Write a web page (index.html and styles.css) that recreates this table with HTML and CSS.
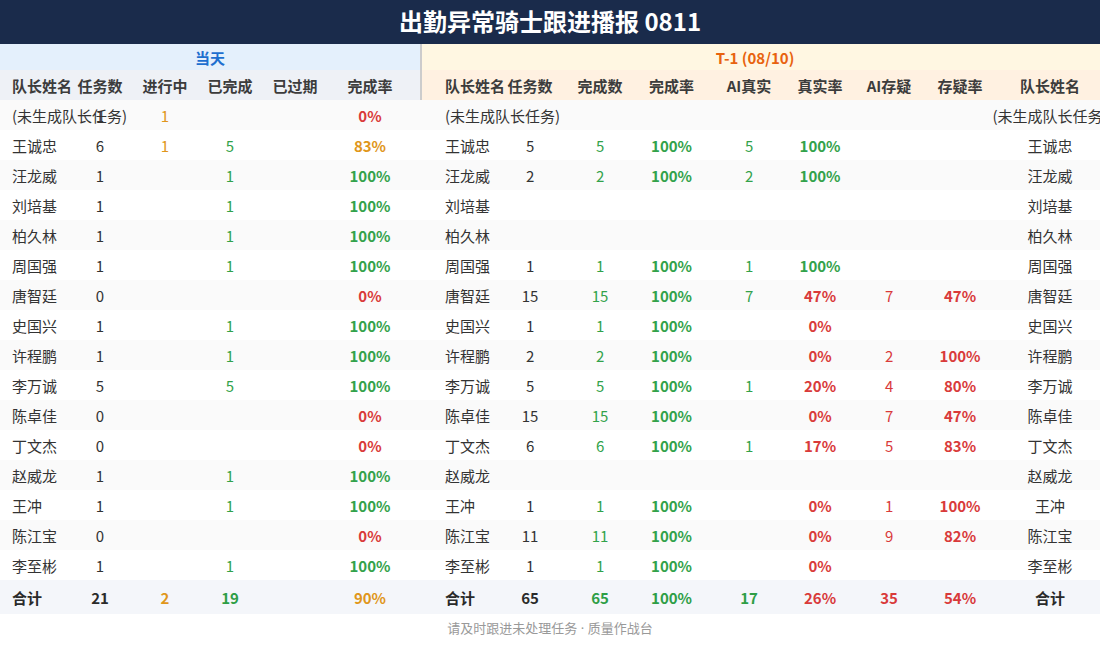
FILE: index.html
```html
<!DOCTYPE html>
<html lang="zh-CN">
<head>
<meta charset="utf-8">
<title>出勤异常骑士跟进播报 0811</title>
<link rel="stylesheet" href="styles.css">
</head>
<body>
<div class="page">
  <header class="title">出勤异常骑士跟进播报 0811</header>
  <div class="wrap">
    <table class="board">
      <colgroup>
        <col class="w68"><col class="w64"><col class="w66"><col class="w64"><col class="w66"><col class="w84"><col class="w8">
        <col class="w2">
        <col class="w73"><col class="w70"><col class="w70"><col class="w73"><col class="w82"><col class="w60"><col class="w78"><col class="w64"><col class="w116">
      </colgroup>
      <thead>
        <tr class="grp">
          <th colspan="7" class="grp-today">当天</th>
          <th class="sep"></th>
          <th colspan="9" class="grp-t1">T-1 (08/10)</th>
        </tr>
        <tr class="hdr">
          <th class="nm l">队长姓名</th><th class="l">任务数</th><th class="l">进行中</th><th class="l">已完成</th><th class="l">已过期</th><th class="l">完成率</th><th class="l"></th>
          <th class="sep"></th>
          <th class="nm2 r1">队长姓名</th><th class="r1">任务数</th><th class="r1">完成数</th><th class="r1">完成率</th><th class="r1">AI真实</th><th class="r1">真实率</th><th class="r1">AI存疑</th><th class="r1">存疑率</th><th class="r1">队长姓名</th>
        </tr>
      </thead>
      <tbody>
        <tr><td class="nm">(未生成队长任务)</td><td>1</td><td class="o">1</td><td></td><td></td><td class="rt r">0%</td><td></td><td class="sep"></td><td class="nm2">(未生成队长任务)</td><td></td><td></td><td></td><td></td><td></td><td></td><td></td><td>(未生成队长任务)</td></tr>
        <tr><td class="nm">王诚忠</td><td>6</td><td class="o">1</td><td class="g">5</td><td></td><td class="rt o">83%</td><td></td><td class="sep"></td><td class="nm2">王诚忠</td><td>5</td><td class="g">5</td><td class="rt g">100%</td><td class="g">5</td><td class="rt g">100%</td><td></td><td></td><td>王诚忠</td></tr>
        <tr><td class="nm">汪龙威</td><td>1</td><td></td><td class="g">1</td><td></td><td class="rt g">100%</td><td></td><td class="sep"></td><td class="nm2">汪龙威</td><td>2</td><td class="g">2</td><td class="rt g">100%</td><td class="g">2</td><td class="rt g">100%</td><td></td><td></td><td>汪龙威</td></tr>
        <tr><td class="nm">刘培基</td><td>1</td><td></td><td class="g">1</td><td></td><td class="rt g">100%</td><td></td><td class="sep"></td><td class="nm2">刘培基</td><td></td><td></td><td></td><td></td><td></td><td></td><td></td><td>刘培基</td></tr>
        <tr><td class="nm">柏久林</td><td>1</td><td></td><td class="g">1</td><td></td><td class="rt g">100%</td><td></td><td class="sep"></td><td class="nm2">柏久林</td><td></td><td></td><td></td><td></td><td></td><td></td><td></td><td>柏久林</td></tr>
        <tr><td class="nm">周国强</td><td>1</td><td></td><td class="g">1</td><td></td><td class="rt g">100%</td><td></td><td class="sep"></td><td class="nm2">周国强</td><td>1</td><td class="g">1</td><td class="rt g">100%</td><td class="g">1</td><td class="rt g">100%</td><td></td><td></td><td>周国强</td></tr>
        <tr><td class="nm">唐智廷</td><td>0</td><td></td><td></td><td></td><td class="rt r">0%</td><td></td><td class="sep"></td><td class="nm2">唐智廷</td><td>15</td><td class="g">15</td><td class="rt g">100%</td><td class="g">7</td><td class="rt r">47%</td><td class="r">7</td><td class="rt r">47%</td><td>唐智廷</td></tr>
        <tr><td class="nm">史国兴</td><td>1</td><td></td><td class="g">1</td><td></td><td class="rt g">100%</td><td></td><td class="sep"></td><td class="nm2">史国兴</td><td>1</td><td class="g">1</td><td class="rt g">100%</td><td></td><td class="rt r">0%</td><td></td><td></td><td>史国兴</td></tr>
        <tr><td class="nm">许程鹏</td><td>1</td><td></td><td class="g">1</td><td></td><td class="rt g">100%</td><td></td><td class="sep"></td><td class="nm2">许程鹏</td><td>2</td><td class="g">2</td><td class="rt g">100%</td><td></td><td class="rt r">0%</td><td class="r">2</td><td class="rt r">100%</td><td>许程鹏</td></tr>
        <tr><td class="nm">李万诚</td><td>5</td><td></td><td class="g">5</td><td></td><td class="rt g">100%</td><td></td><td class="sep"></td><td class="nm2">李万诚</td><td>5</td><td class="g">5</td><td class="rt g">100%</td><td class="g">1</td><td class="rt r">20%</td><td class="r">4</td><td class="rt r">80%</td><td>李万诚</td></tr>
        <tr><td class="nm">陈卓佳</td><td>0</td><td></td><td></td><td></td><td class="rt r">0%</td><td></td><td class="sep"></td><td class="nm2">陈卓佳</td><td>15</td><td class="g">15</td><td class="rt g">100%</td><td></td><td class="rt r">0%</td><td class="r">7</td><td class="rt r">47%</td><td>陈卓佳</td></tr>
        <tr><td class="nm">丁文杰</td><td>0</td><td></td><td></td><td></td><td class="rt r">0%</td><td></td><td class="sep"></td><td class="nm2">丁文杰</td><td>6</td><td class="g">6</td><td class="rt g">100%</td><td class="g">1</td><td class="rt r">17%</td><td class="r">5</td><td class="rt r">83%</td><td>丁文杰</td></tr>
        <tr><td class="nm">赵威龙</td><td>1</td><td></td><td class="g">1</td><td></td><td class="rt g">100%</td><td></td><td class="sep"></td><td class="nm2">赵威龙</td><td></td><td></td><td></td><td></td><td></td><td></td><td></td><td>赵威龙</td></tr>
        <tr><td class="nm">王冲</td><td>1</td><td></td><td class="g">1</td><td></td><td class="rt g">100%</td><td></td><td class="sep"></td><td class="nm2">王冲</td><td>1</td><td class="g">1</td><td class="rt g">100%</td><td></td><td class="rt r">0%</td><td class="r">1</td><td class="rt r">100%</td><td>王冲</td></tr>
        <tr><td class="nm">陈江宝</td><td>0</td><td></td><td></td><td></td><td class="rt r">0%</td><td></td><td class="sep"></td><td class="nm2">陈江宝</td><td>11</td><td class="g">11</td><td class="rt g">100%</td><td></td><td class="rt r">0%</td><td class="r">9</td><td class="rt r">82%</td><td>陈江宝</td></tr>
        <tr><td class="nm">李至彬</td><td>1</td><td></td><td class="g">1</td><td></td><td class="rt g">100%</td><td></td><td class="sep"></td><td class="nm2">李至彬</td><td>1</td><td class="g">1</td><td class="rt g">100%</td><td></td><td class="rt r">0%</td><td></td><td></td><td>李至彬</td></tr>
      </tbody>
      <tfoot>
        <tr class="total"><td class="nm">合计</td><td>21</td><td class="o">2</td><td class="g">19</td><td></td><td class="o">90%</td><td></td><td class="sep"></td><td class="nm2">合计</td><td>65</td><td class="g">65</td><td class="g">100%</td><td class="g">17</td><td class="r">26%</td><td class="r">35</td><td class="r">54%</td><td>合计</td></tr>
      </tfoot>
    </table>
  </div>
  <footer class="foot">请及时跟进未处理任务<span class="dot"> · </span>质量作战台</footer>
</div>
</body>
</html>
```

FILE: styles.css
```css
html, body {
  margin: 0;
  padding: 0;
  background: #ffffff;
}
body {
  font-family: "Noto Sans CJK SC", "Noto Sans", sans-serif;
  color: #333333;
}
.page {
  width: 1100px;
  overflow: hidden;
}
.title {
  height: 44px;
  line-height: 42px;
  background: #1a2b4b;
  color: #ffffff;
  font-size: 24px;
  font-weight: 700;
  text-align: center;
}
.wrap {
  width: 1100px;
  overflow: hidden;
}
.board {
  table-layout: fixed;
  width: 1108px;
  border-collapse: collapse;
  border-spacing: 0;
  font-size: 15px;
}
.w2 { width: 2px; }
.w8 { width: 8px; }
.w60 { width: 60px; }
.w64 { width: 64px; }
.w66 { width: 66px; }
.w68 { width: 68px; }
.w70 { width: 70px; }
.w73 { width: 73px; }
.w78 { width: 78px; }
.w82 { width: 82px; }
.w84 { width: 84px; }
.w116 { width: 116px; }

.board th, .board td {
  padding: 0;
  text-align: center;
  white-space: nowrap;
  overflow: visible;
}
.grp th {
  height: 26px;
  font-size: 15px;
  font-weight: 700;
}
.grp-today {
  background: #e4f0fc;
  color: #1d6fcf;
}
.board .grp-t1 {
  background: #fff7e2;
  color: #e8630e;
  padding-right: 20px;
}
.hdr th {
  height: 30px;
  font-weight: 700;
  color: #3c3c3c;
}
.hdr .l { background: #eef1f6; }
.hdr .r1 { background: #fff1e1; }
.board th.sep { background: #cccccc; }

.board .nm {
  text-align: left;
  padding-left: 12px;
}
.board .nm2 {
  text-align: left;
  padding-left: 23px;
}

tbody tr td {
  height: 30px;
  color: #333333;
}
tbody tr:nth-child(odd) td { background: #fafafa; }
tbody tr:nth-child(even) td { background: #ffffff; }

tbody td.o { color: #e0961b; }
tbody td.g { color: #32a24a; }
tbody td.r { color: #d93a3a; }
.rt { font-weight: 700; }

.total td {
  height: 34px;
  background: #f4f6fa;
  font-weight: 700;
  color: #2a2a2a;
}
.total td.o { color: #e0961b; }
.total td.g { color: #2e9e46; }
.total td.r { color: #d93a3a; }

.foot {
  text-align: center;
  font-size: 13px;
  color: #999999;
  padding-top: 5px;
  line-height: 18px;
}
.dot {
  font-family: "Noto Sans", sans-serif;
}
```
